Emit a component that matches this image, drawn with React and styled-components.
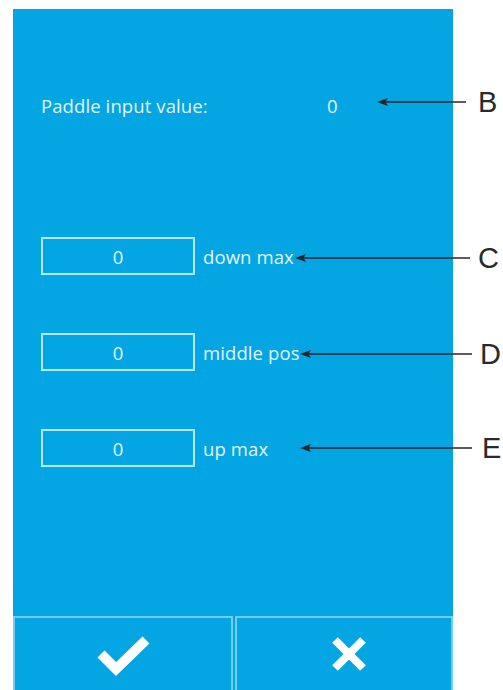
import React from "react";
import styled, { createGlobalStyle } from "styled-components";

const Global = createGlobalStyle`
  html, body { margin: 0; padding: 0; background: #ffffff; }
  body { font-family: "Open Sans", "Noto Sans", sans-serif; }
`;

const Page = styled.div`
  position: relative;
  width: 503px;
  height: 690px;
  padding: 9px 0 0 13px;
  box-sizing: border-box;
  overflow: hidden;
`;

const Panel = styled.div`
  width: 440px;
  height: 681px;
  background: #03a5e2;
  display: flex;
  flex-direction: column;
`;

const Content = styled.div`
  flex: 1;
  display: flex;
  flex-direction: column;
  padding: 86px 0 0 28px;
  color: #e2f4fb;
  font-size: 18.5px;
  font-weight: 500;
  letter-spacing: 0.1px;
`;

const StatusRow = styled.div`
  display: flex;
  align-items: center;
  height: 20px;
  margin-bottom: 122px;
`;

const StatusLabel = styled.span`
  width: 286px;
`;

const Fields = styled.div`
  display: flex;
  flex-direction: column;
  gap: 58px;
`;

const FieldRow = styled.div`
  display: flex;
  align-items: center;
  gap: 8px;
`;

const ValueBox = styled.div`
  width: 154px;
  height: 38px;
  box-sizing: border-box;
  border: 2px solid #b5e6f8;
  display: flex;
  align-items: center;
  justify-content: center;
`;

const FieldLabel = styled.span``;

const ButtonBar = styled.div`
  height: 74px;
  display: grid;
  grid-template-columns: 220px 1fr;
  column-gap: 2px;
`;

const ActionButton = styled.button`
  border: 2px solid #72cdf1;
  border-bottom: none;
  background: #03a5e2;
  margin: 0;
  padding: 0 0 0 ${(p) => p.$shift || 0}px;
  display: flex;
  align-items: center;
  justify-content: center;
  cursor: pointer;
`;

const Callout = styled.div`
  position: absolute;
  left: ${(p) => p.$x}px;
  top: ${(p) => p.$y - 15}px;
  height: 30px;
  display: flex;
  align-items: center;
`;

const Letter = styled.span`
  margin-left: ${(p) => p.$gap}px;
  font-family: "Liberation Sans", Arial, sans-serif;
  font-size: 29px;
  line-height: 30px;
  color: #2a2a2a;
`;

function Arrow({ width }) {
  return (
    <svg width={width} height="10" viewBox={`0 0 ${width} 10`}>
      <line x1="8" y1="5" x2={width} y2="5" stroke="#262626" strokeWidth="1.6" />
      <polygon points="0,5 11,1 8.5,5 11,9" fill="#262626" />
    </svg>
  );
}

function CheckIcon() {
  return (
    <svg width="56" height="44" viewBox="0 0 56 44">
      <polyline
        points="6,22 21,37 51,8"
        fill="none"
        stroke="#ffffff"
        strokeWidth="10"
        strokeLinejoin="miter"
        strokeLinecap="butt"
      />
    </svg>
  );
}

function CrossIcon() {
  return (
    <svg width="36" height="36" viewBox="0 0 36 36">
      <path
        d="M4 4 L32 32 M32 4 L4 32"
        stroke="#ffffff"
        strokeWidth="8"
        strokeLinecap="butt"
      />
    </svg>
  );
}

const fields = [
  { value: "0", label: "down max" },
  { value: "0", label: "middle pos" },
  { value: "0", label: "up max" },
];

const callouts = [
  { letter: "B", y: 102, x1: 377, x2: 466, gap: 12 },
  { letter: "C", y: 258, x1: 295, x2: 470, gap: 8 },
  { letter: "D", y: 354, x1: 300, x2: 472, gap: 8 },
  { letter: "E", y: 448, x1: 300, x2: 472, gap: 10 },
];

export default function App() {
  return (
    <>
      <Global />
      <Page>
        <Panel>
          <Content>
            <StatusRow>
              <StatusLabel>Paddle input value:</StatusLabel>
              <span>0</span>
            </StatusRow>
            <Fields>
              {fields.map((f) => (
                <FieldRow key={f.label}>
                  <ValueBox>{f.value}</ValueBox>
                  <FieldLabel>{f.label}</FieldLabel>
                </FieldRow>
              ))}
            </Fields>
          </Content>
          <ButtonBar>
            <ActionButton aria-label="confirm">
              <CheckIcon />
            </ActionButton>
            <ActionButton aria-label="cancel" $shift={10}>
              <CrossIcon />
            </ActionButton>
          </ButtonBar>
        </Panel>
        {callouts.map((c) => (
          <Callout key={c.letter} $x={c.x1} $y={c.y}>
            <Arrow width={c.x2 - c.x1} />
            <Letter $gap={c.gap}>{c.letter}</Letter>
          </Callout>
        ))}
      </Page>
    </>
  );
}
